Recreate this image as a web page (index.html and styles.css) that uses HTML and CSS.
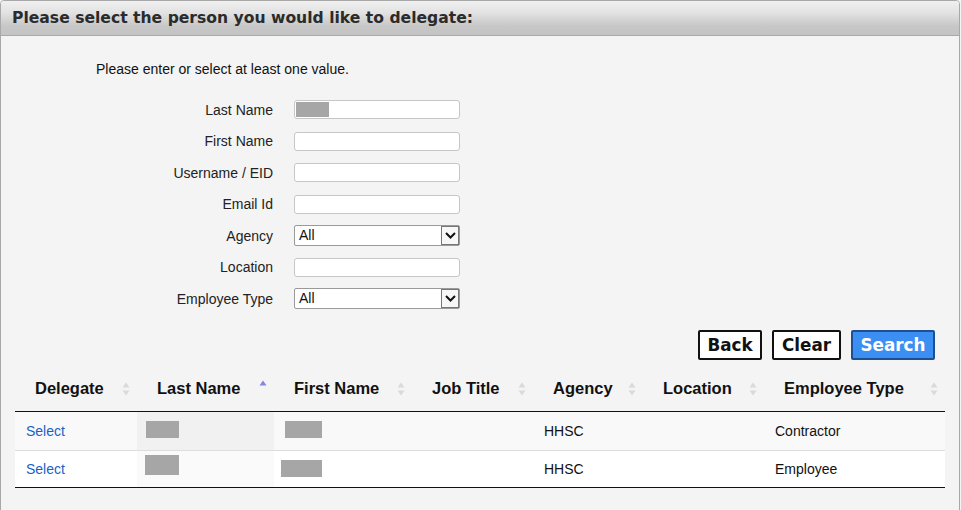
FILE: index.html
```html
<!DOCTYPE html>
<html>
<head>
<meta charset="utf-8">
<link rel="stylesheet" href="styles.css">
</head>
<body>
<div class="card">
  <div class="card-head">Please select the person you would like to delegate:</div>
  <div class="card-body">
    <p class="instr">Please enter or select at least one value.</p>
    <div class="form">
      <label class="lbl">Last Name</label>
      <div class="field"><span class="input"><span class="blur blur-in"></span></span></div>
      <label class="lbl">First Name</label>
      <div class="field"><span class="input"></span></div>
      <label class="lbl">Username / EID</label>
      <div class="field"><span class="input"></span></div>
      <label class="lbl">Email Id</label>
      <div class="field"><span class="input"></span></div>
      <label class="lbl">Agency</label>
      <div class="field"><span class="select"><span class="sel-val">All</span><span class="sel-btn"><svg width="13" height="9" viewBox="0 0 13 9"><path d="M2 2 L6.5 6.5 L11 2" fill="none" stroke="#111" stroke-width="2"/></svg></span></span></div>
      <label class="lbl">Location</label>
      <div class="field"><span class="input"></span></div>
      <label class="lbl">Employee Type</label>
      <div class="field"><span class="select"><span class="sel-val">All</span><span class="sel-btn"><svg width="13" height="9" viewBox="0 0 13 9"><path d="M2 2 L6.5 6.5 L11 2" fill="none" stroke="#111" stroke-width="2"/></svg></span></span></div>
    </div>
    <div class="actions">
      <button class="btn btn-back">Back</button>
      <button class="btn btn-clear">Clear</button>
      <button class="btn btn-search">Search</button>
    </div>
    <table class="grid">
      <colgroup>
        <col class="c1"><col class="c2"><col class="c3"><col class="c4"><col class="c5"><col class="c6"><col class="c7">
      </colgroup>
      <thead>
        <tr>
          <th><span class="th-in">Delegate<svg class="sort" width="8" height="14" viewBox="0 0 8 14"><path d="M0.5 5.5 L4 0.5 L7.5 5.5Z M0.5 8.5 L4 13.5 L7.5 8.5Z" fill="#dadada"/></svg></span></th>
          <th><span class="th-in">Last Name<svg class="sort asc" width="8" height="14" viewBox="0 0 8 14"><path d="M0.5 5.5 L4 0.5 L7.5 5.5Z" fill="#8484e6"/></svg></span></th>
          <th><span class="th-in">First Name<svg class="sort" width="8" height="14" viewBox="0 0 8 14"><path d="M0.5 5.5 L4 0.5 L7.5 5.5Z M0.5 8.5 L4 13.5 L7.5 8.5Z" fill="#dadada"/></svg></span></th>
          <th><span class="th-in">Job Title<svg class="sort" width="8" height="14" viewBox="0 0 8 14"><path d="M0.5 5.5 L4 0.5 L7.5 5.5Z M0.5 8.5 L4 13.5 L7.5 8.5Z" fill="#dadada"/></svg></span></th>
          <th><span class="th-in">Agency<svg class="sort" width="8" height="14" viewBox="0 0 8 14"><path d="M0.5 5.5 L4 0.5 L7.5 5.5Z M0.5 8.5 L4 13.5 L7.5 8.5Z" fill="#dadada"/></svg></span></th>
          <th><span class="th-in">Location<svg class="sort" width="8" height="14" viewBox="0 0 8 14"><path d="M0.5 5.5 L4 0.5 L7.5 5.5Z M0.5 8.5 L4 13.5 L7.5 8.5Z" fill="#dadada"/></svg></span></th>
          <th><span class="th-in">Employee Type<svg class="sort" width="8" height="14" viewBox="0 0 8 14"><path d="M0.5 5.5 L4 0.5 L7.5 5.5Z M0.5 8.5 L4 13.5 L7.5 8.5Z" fill="#dadada"/></svg></span></th>
        </tr>
      </thead>
      <tbody>
        <tr class="odd">
          <td><a class="link" href="#">Select</a></td>
          <td class="sorted"><span class="blur b-l1"></span></td>
          <td><span class="blur b-f1"></span></td>
          <td></td>
          <td>HHSC</td>
          <td></td>
          <td>Contractor</td>
        </tr>
        <tr class="even">
          <td><a class="link" href="#">Select</a></td>
          <td class="sorted"><span class="blur b-l2"></span></td>
          <td><span class="blur b-f2"></span></td>
          <td></td>
          <td>HHSC</td>
          <td></td>
          <td>Employee</td>
        </tr>
      </tbody>
    </table>
  </div>
</div>
</body>
</html>
```

FILE: styles.css
```css
html, body {
  margin: 0;
  padding: 0;
  background: #f4f4f4;
}
body {
  font-family: "Liberation Sans", Arial, sans-serif;
  color: #111;
}
.card {
  width: 960px;
  height: 520px;
  box-sizing: border-box;
  border: 1px solid #a8a8a8;
  border-radius: 4px 4px 0 0;
  background: #f4f4f4;
}
.card-head {
  height: 35px;
  box-sizing: border-box;
  border-bottom: 1px solid #a9a9a9;
  background: linear-gradient(#f0f0f0 0%, #e2e2e2 35%, #c6c6c6 75%, #c4c4c4 100%);
  border-radius: 3px 3px 0 0;
  font-family: "DejaVu Sans", Verdana, sans-serif;
  font-weight: bold;
  font-size: 15.6px;
  color: #2b2b2b;
  line-height: 35px;
  padding-left: 11px;
}
.card-body {
  padding-top: 23px;
}
.instr {
  margin: 0 0 15px 95px;
  font-size: 14px;
  line-height: 20px;
  color: #111;
}
.form {
  display: grid;
  grid-template-columns: 272px 166px;
  grid-auto-rows: 31.5px;
  column-gap: 21px;
  align-items: center;
}
.lbl {
  text-align: right;
  font-size: 14px;
  color: #222;
}
.field {
  display: flex;
  align-items: center;
}
.input {
  display: block;
  width: 166px;
  height: 19px;
  box-sizing: border-box;
  border: 1px solid #c6c6c6;
  border-radius: 3px;
  background: #fff;
  position: relative;
}
.blur {
  display: inline-block;
  background: #a6a6a6;
}
.blur-in {
  position: absolute;
  left: 1px;
  top: 1px;
  width: 33px;
  height: 15px;
}
.select {
  display: flex;
  width: 166px;
  height: 21px;
  box-sizing: border-box;
  border: 1px solid #9a9a9a;
  border-radius: 2px;
  background: #fff;
  align-items: stretch;
}
.sel-val {
  flex: 1;
  font-size: 14px;
  line-height: 19px;
  padding-left: 4px;
  color: #111;
}
.sel-btn {
  width: 18px;
  box-sizing: border-box;
  border: 1px solid #777;
  display: flex;
  align-items: center;
  justify-content: center;
  background: #f7f7f7;
}
.actions {
  display: flex;
  justify-content: flex-end;
  gap: 10px;
  padding-right: 24px;
  margin-top: 15px;
}
.btn {
  height: 30px;
  box-sizing: border-box;
  border: 2px solid #111;
  border-radius: 2px;
  background: #fff;
  color: #111;
  font-family: "DejaVu Sans", Verdana, sans-serif;
  font-weight: bold;
  font-size: 16.8px;
  padding: 0 5px;
  line-height: 26px;
}
.btn-back { width: 64px; }
.btn-clear { width: 69px; }
.btn-search {
  width: 84px;
  background: #3b8ff2;
  border-color: #1d4f92;
  color: #fff;
}
.grid {
  margin: 10px 0 0 14px;
  width: 930px;
  table-layout: fixed;
  border-collapse: collapse;
  border-spacing: 0;
}
.c1 { width: 122px; }
.c2 { width: 137px; }
.c3 { width: 138px; }
.c4 { width: 121px; }
.c5 { width: 110px; }
.c6 { width: 121px; }
.c7 { width: 181px; }
.grid th {
  height: 42px;
  padding: 0 0 3px 0;
  box-sizing: border-box;
  text-align: left;
  font-size: 16.5px;
  font-weight: bold;
  color: #111;
  border-bottom: 1px solid #111;
}
.th-in {
  display: flex;
  align-items: center;
  justify-content: space-between;
  padding: 0 7px 0 20px;
}
.sort {
  flex: none;
}
.sort.asc {
  margin-top: -4px;
}
.grid td {
  height: 38px;
  padding: 0 0 0 11px;
  font-size: 14px;
  color: #111;
  vertical-align: middle;
}
.grid tr.odd td { background: #f9f9f9; }
.grid tr.even td { background: #fff; border-top: 1px solid #ddd; height: 36px; }
.grid tr.odd td.sorted { background: #f1f1f1; }
.grid tr.even td.sorted { background: #fafafa; }
.grid tbody tr:last-child td { border-bottom: 1px solid #111; }
.link {
  color: #1b5fc6;
  text-decoration: none;
}
.b-l1 { width: 33px; height: 17px; margin-left: -2px; }
.b-f1 { width: 37px; height: 17px; }
.b-l2 { width: 34px; height: 20px; margin-left: -3px; margin-top: -5px; }
.b-f2 { width: 41px; height: 17px; margin-left: -4px; margin-top: 2px; }
```
